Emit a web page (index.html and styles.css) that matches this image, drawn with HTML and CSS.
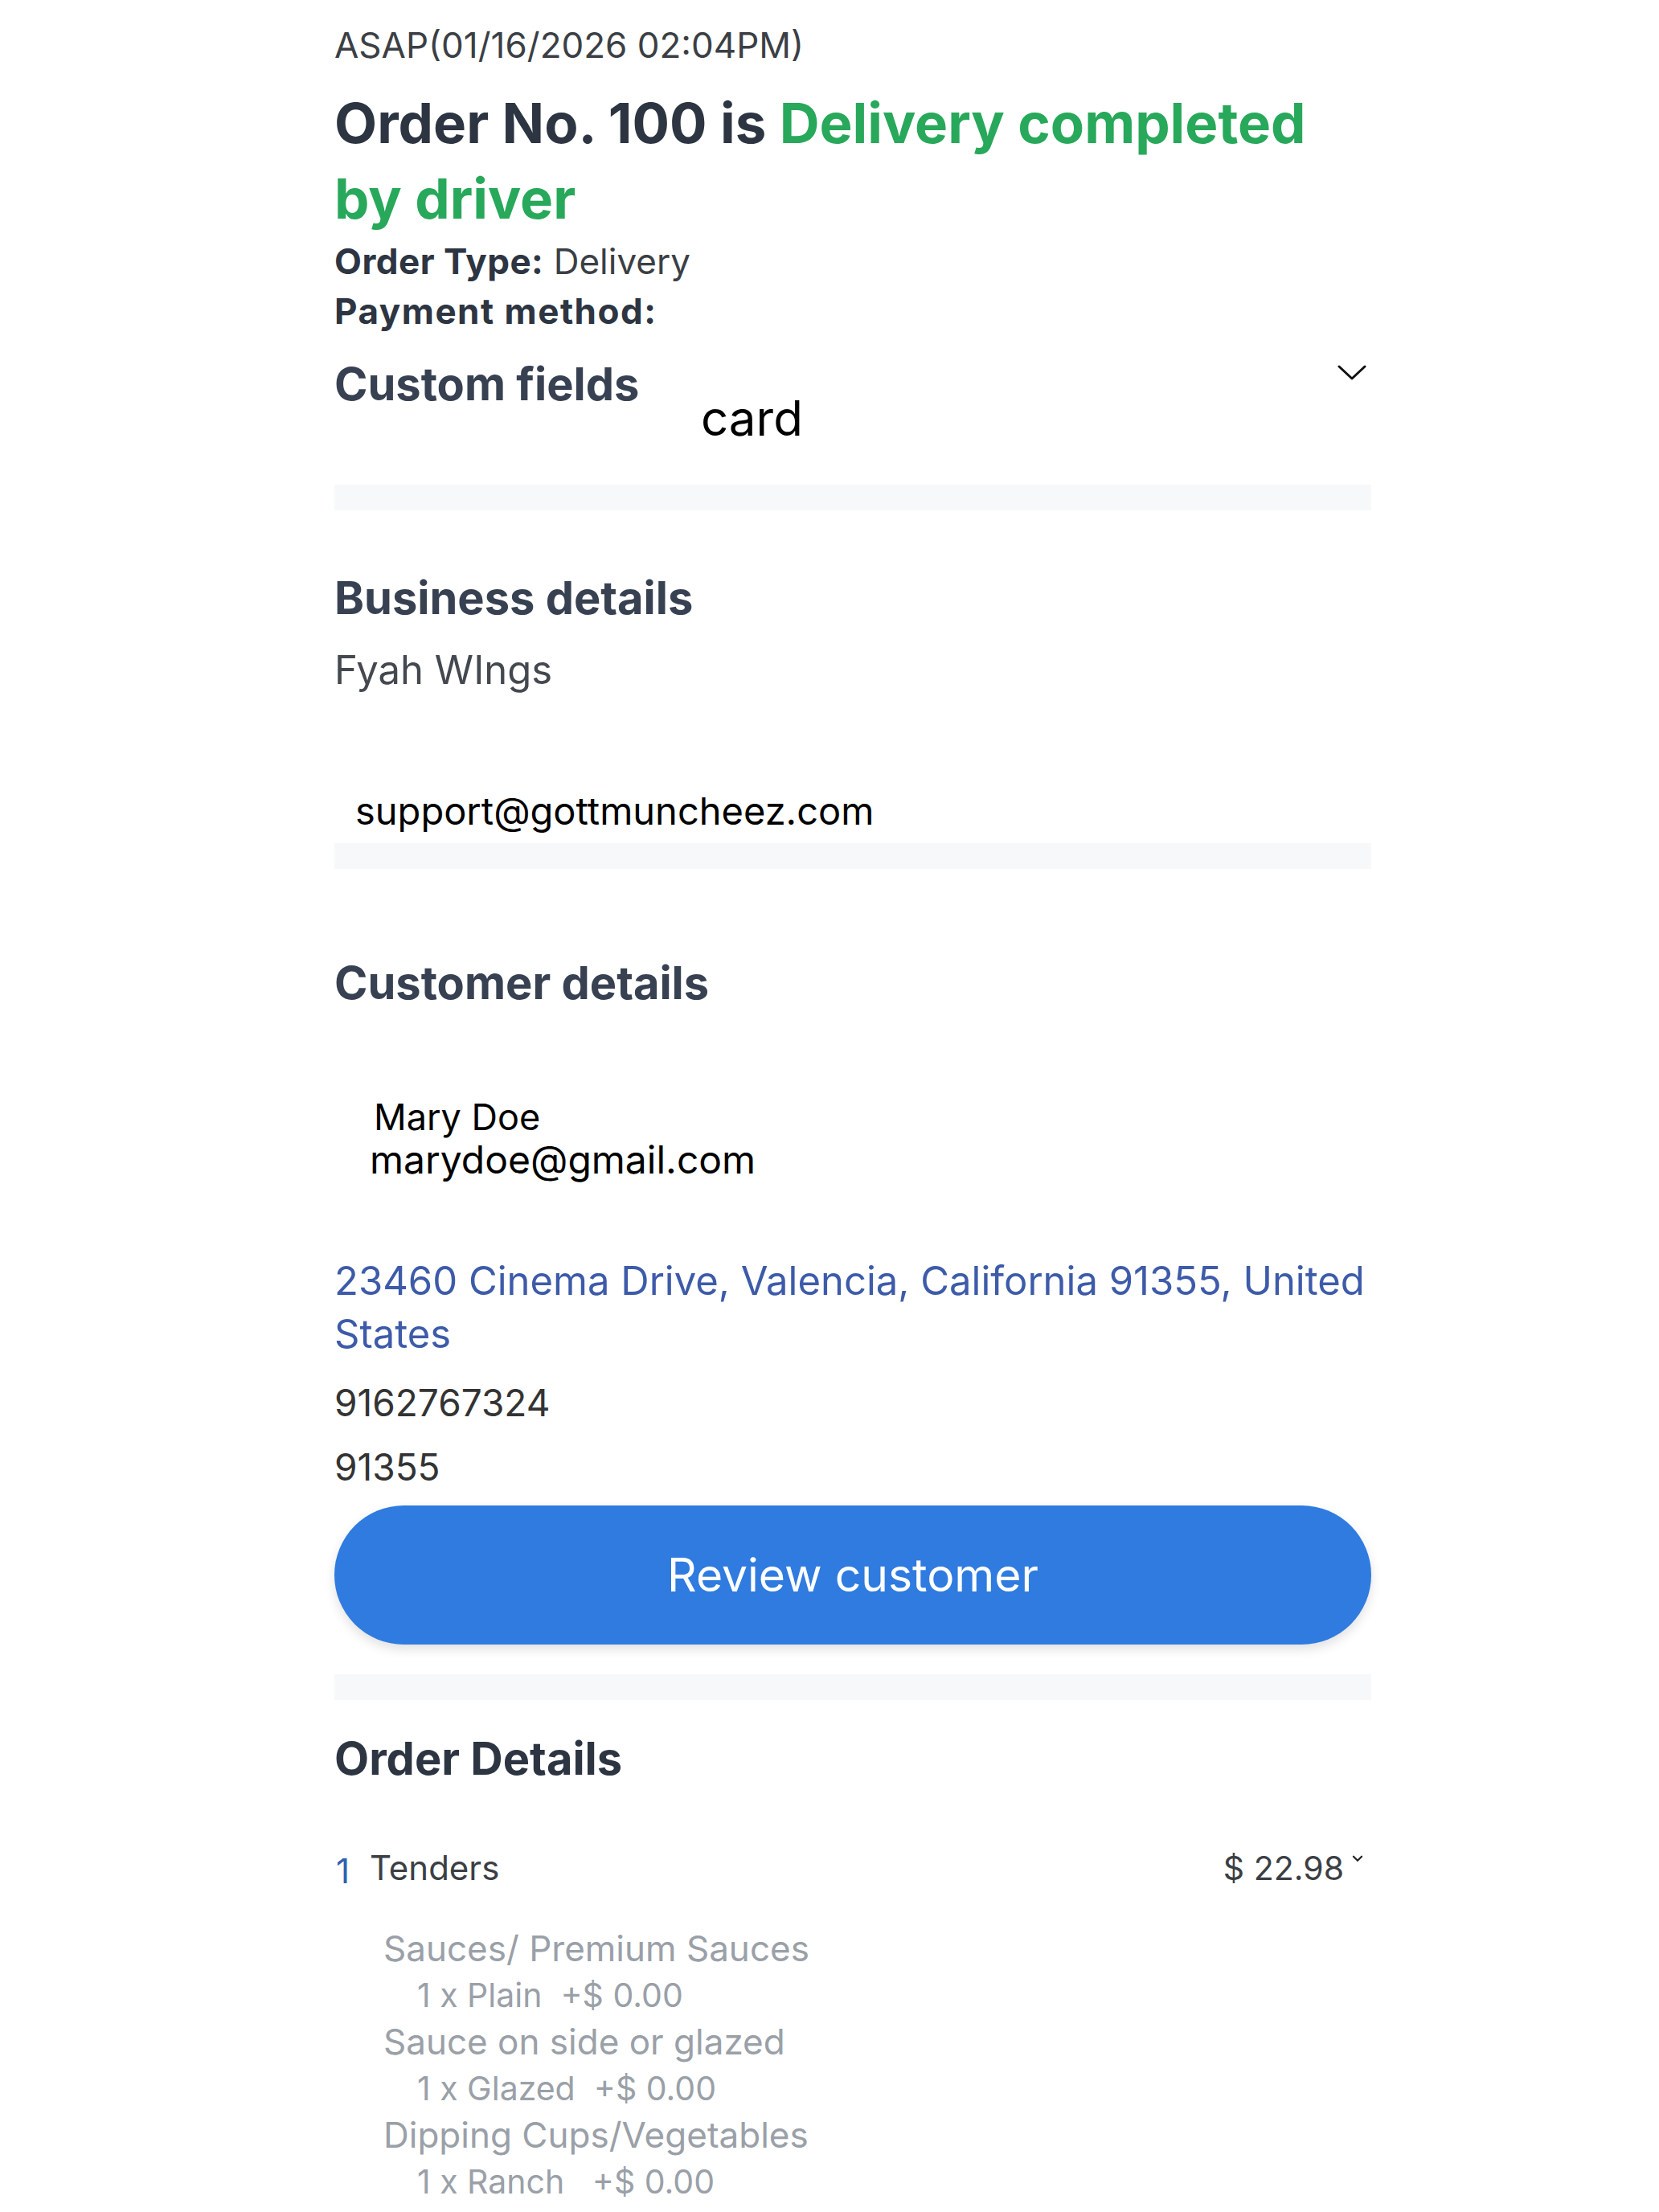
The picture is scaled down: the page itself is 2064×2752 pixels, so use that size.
FILE: index.html
```html
<!DOCTYPE html>
<html lang="en">
<head>
    <meta charset="UTF-8">
    <meta name="viewport" content="width=device-width, initial-scale=1.0">
    <title>Order No. 100</title>
    <link rel="stylesheet" href="styles.css">
</head>
<body>
    <div class="order">
        <div class="when">ASAP(01/16/2026 02:04PM)</div>
        <h1 class="status">Order No. 100 is <span class="done">Delivery completed</span> <span class="done">by driver</span></h1>
        <p class="meta"><strong>Order Type:</strong> Delivery</p>
        <p class="meta payment"><strong>Payment method:</strong> <span class="pay-value">card</span></p>

        <div class="custom-fields">
            <h2>Custom fields</h2>
            <svg class="chevron" viewBox="0 0 36 20" width="36" height="20">
                <path d="M2 2 L18 17 L34 2" fill="none" stroke="#111" stroke-width="3" stroke-linecap="round" stroke-linejoin="round"/>
            </svg>
        </div>

        <div class="divider first"></div>

        <section class="business">
            <h2>Business details</h2>
            <p class="name">Fyah WIngs</p>
            <p class="support">support@gottmuncheez.com</p>
        </section>

        <div class="divider tight"></div>

        <section class="customer">
            <h2>Customer details</h2>
            <p class="cust-name">Mary Doe</p>
            <p class="cust-mail">marydoe@gmail.com</p>
            <p class="address">23460 Cinema Drive, Valencia, California 91355, United States</p>
            <p class="phone">9162767324</p>
            <p class="zip">91355</p>
            <button class="review">Review customer</button>
        </section>

        <div class="divider"></div>

        <section class="items">
            <h2>Order Details</h2>
            <div class="item">
                <span class="qty">1</span>
                <span class="item-name">Tenders</span>
                <span class="price">$ 22.98</span>
                <svg class="mini-chevron" viewBox="0 0 12 8" width="14" height="9">
                    <path d="M1.5 1.5 L6 6 L10.5 1.5" fill="none" stroke="#222" stroke-width="2" stroke-linecap="round"/>
                </svg>
            </div>
            <div class="options">
                <p class="group">Sauces/ Premium Sauces</p>
                <p class="choice">1 x Plain&nbsp; +$ 0.00</p>
                <p class="group">Sauce on side or glazed</p>
                <p class="choice">1 x Glazed&nbsp; +$ 0.00</p>
                <p class="group">Dipping Cups/Vegetables</p>
                <p class="choice">1 x Ranch&nbsp;&nbsp; +$ 0.00</p>
            </div>
        </section>
    </div>
</body>
</html>
```

FILE: styles.css
```css
body {
    margin: 0;
    padding: 0;
    background-color: #fff;
    font-family: 'Inter', 'Open Sans', sans-serif;
    color: #333;
}
p, h1, h2 {
    margin: 0;
}
.order {
    width: 1290px;
    margin-left: 416px;
    padding-top: 26px;
}
.when {
    font-size: 44px;
    line-height: 60px;
    color: #3b3f45;
}
.status {
    margin-top: 20px;
    font-size: 69px;
    line-height: 94px;
    font-weight: 700;
    color: #2d3542;
}
.status .done {
    color: #28a85a;
}
.meta {
    font-size: 44px;
    line-height: 62px;
    color: #3b3f45;
}
.meta strong {
    font-weight: 700;
    letter-spacing: 0.5px;
    color: #2d3542;
}
.payment strong {
    letter-spacing: 1.5px;
}
.payment {
    position: relative;
}
.pay-value {
    position: absolute;
    left: 456px;
    top: 129px;
    font-size: 60px;
    line-height: 70px;
    color: #000;
}
h2 {
    font-size: 56px;
    line-height: 70px;
    font-weight: 700;
    color: #374151;
}
.custom-fields {
    margin-top: 25px;
    display: flex;
    justify-content: space-between;
    align-items: flex-start;
}
.chevron {
    margin-top: 11px;
    margin-right: 6px;
}
.divider {
    height: 32px;
    background-color: #f7f8fa;
    margin-top: 37px;
}
.divider.first {
    margin-top: 90px;
}
.divider.tight {
    margin-top: 8px;
}
.business h2 {
    margin-top: 74px;
}
.name {
    margin-top: 23px;
    font-size: 49px;
    line-height: 64px;
    color: #44484f;
}
.support {
    margin-top: 111px;
    padding-left: 26px;
    font-size: 47px;
    line-height: 64px;
    color: #000;
}
.customer h2 {
    margin-top: 107px;
}
.cust-name, .cust-mail {
    font-size: 45px;
    line-height: 53px;
    color: #000;
}
.cust-name {
    margin-top: 105px;
    padding-left: 49px;
}
.cust-mail {
    padding-left: 44px;
    font-size: 48px;
}
.address {
    margin-top: 92px;
    font-size: 49px;
    line-height: 66px;
    color: #3d5ba9;
}
.phone, .zip {
    font-size: 46px;
    line-height: 64px;
    color: #333;
}
.phone {
    margin-top: 20px;
}
.zip {
    margin-top: 16px;
}
.review {
    display: block;
    width: 100%;
    height: 173px;
    margin-top: 16px;
    border: none;
    border-radius: 87px;
    background-color: #2f7be0;
    color: #fff;
    font-family: inherit;
    font-size: 57px;
    box-shadow: 0 6px 14px rgba(0, 0, 0, 0.12);
    cursor: pointer;
}
.items h2 {
    margin-top: 38px;
    color: #2d3542;
}
.item {
    margin-top: 71px;
    display: flex;
    align-items: center;
    font-size: 42px;
    line-height: 60px;
    color: #3b3f45;
}
.qty {
    width: 42px;
    padding-left: 2px;
    color: #2f5fb0;
    position: relative;
    top: 4px;
}
.item-name {
    flex: 1;
}
.price {
    font-size: 41px;
    color: #3b3f45;
}
.mini-chevron {
    margin-left: 10px;
    margin-right: 10px;
    align-self: flex-start;
    margin-top: 14px;
}
.options {
    margin-top: 41px;
    padding-left: 61px;
    font-size: 44px;
    line-height: 58px;
    color: #9aa0a8;
}
.choice {
    padding-left: 42px;
    font-size: 41px;
}
```
